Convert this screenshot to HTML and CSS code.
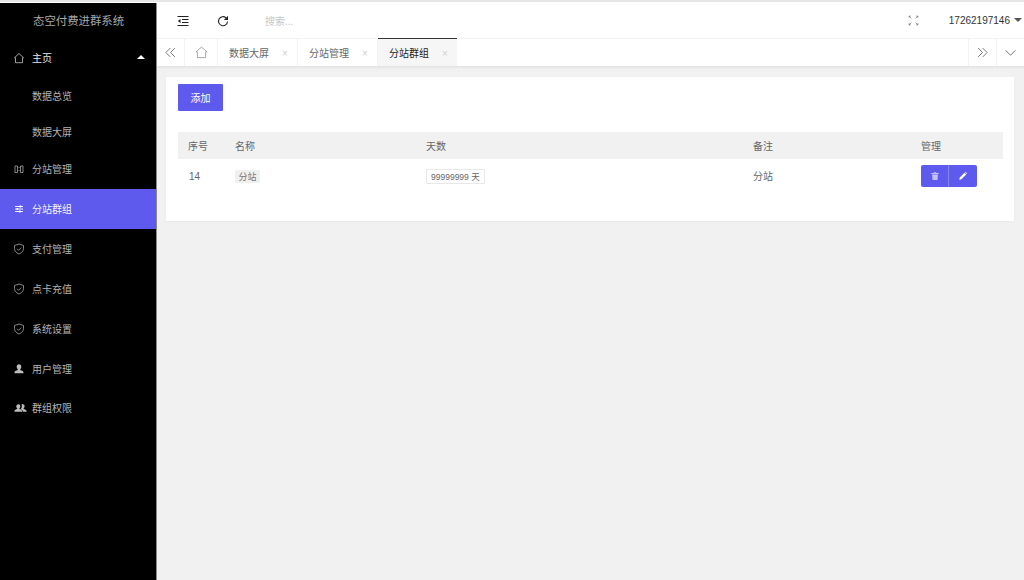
FILE: index.html
```html
<!DOCTYPE html>
<html lang="zh">
<head>
<meta charset="utf-8">
<title>态空付费进群系统</title>
<link rel="stylesheet" href="styles.css">
</head>
<body>
<div class="app">
  <aside class="sidebar">
    <div class="brand">态空付费进群系统</div>
    <nav class="menu">
      <a class="item parent"><svg class="ico" viewBox="0 0 12 12"><path d="M1.500 5.700 6 1.500l4.500 4.200h-1v5h-7v-5z"/></svg><span>主页</span><i class="caret"></i></a>
      <a class="sub sub-a">数据总览</a>
      <a class="sub sub-b">数据大屏</a>
      <a class="item"><svg class="ico" viewBox="0 0 12 12"><path d="M2 3h2.500v6.500H2zM7.500 3H10v6.500H7.500zM6 4v1M6 7v1"/></svg><span>分站管理</span></a>
      <a class="item active"><svg class="ico" viewBox="0 0 12 12"><path d="M2 3.500h8M2 6h8M2 8.500h8"/><path class="knob" d="M6.500 2.600h1.700v1.800H6.500zM3.500 5.100h1.700v1.800H3.500zM6 7.600h1.700v1.800H6z"/></svg><span>分站群组</span></a>
      <a class="item"><svg class="ico" viewBox="0 0 12 12"><path d="M6 1 10.500 2.500v3.200c0 2.500-2 4.200-4.500 5.300-2.500-1.100-4.500-2.800-4.500-5.300V2.500z"/><path d="m4 5.800 1.500 1.500L8.200 4.600"/></svg><span>支付管理</span></a>
      <a class="item"><svg class="ico" viewBox="0 0 12 12"><path d="M6 1 10.500 2.500v3.200c0 2.500-2 4.200-4.500 5.300-2.500-1.100-4.500-2.800-4.500-5.300V2.500z"/><path d="m4 5.800 1.500 1.500L8.200 4.600"/></svg><span>点卡充值</span></a>
      <a class="item"><svg class="ico" viewBox="0 0 12 12"><path d="M6 1 10.500 2.500v3.200c0 2.500-2 4.200-4.500 5.300-2.500-1.100-4.500-2.800-4.500-5.300V2.500z"/><path d="m4 5.800 1.500 1.500L8.200 4.600"/></svg><span>系统设置</span></a>
      <a class="item tight"><svg class="ico solid" viewBox="0 0 12 12"><path d="M6 1.200c1.500 0 2.300 1.100 2.300 2.500 0 1-.5 2-1.100 2.500v.9c1.300.5 3.300 1 3.300 2.400v.7h-9v-.7c0-1.400 2-1.900 3.300-2.400v-.9c-.6-.5-1.100-1.500-1.100-2.500C3.700 2.300 4.500 1.200 6 1.200z"/></svg><span>用户管理</span></a>
      <a class="item"><svg class="ico solid wide" viewBox="0 0 14 12"><path d="M4.800 2c1.300 0 2 1 2 2.200 0 .9-.4 1.700-1 2.200v.8c1.200.4 2.900.9 2.900 2.100v.7H.5v-.7c0-1.200 1.700-1.700 2.900-2.100v-.8c-.6-.5-1-1.300-1-2.200C2.800 3 3.500 2 4.800 2z"/><path d="M9.500 2c1.200 0 1.900 1 1.900 2.200 0 .9-.4 1.700-1 2.200v.8c1.100.4 3.100.9 3.100 2.100v.7h-4c0-1.300-.8-2-2-2.600v-.8c.7-.6 1-1.500 1-2.400 0-.7-.1-1.300-.4-1.700.2-.3.9-.9 1.400-.9z"/></svg><span>群组权限</span></a>
    </nav>
  </aside>
  <main class="main">
    <header class="topbar">
      <button class="tool"><svg viewBox="0 0 12 12"><path d="M.5 1.500h11M5 4.500h6.500M5 7.500h6.500M.5 10.500h11"/><path class="fill" d="M3.500 4v4L.8 6z"/></svg></button>
      <button class="tool"><svg viewBox="0 0 12 12"><path d="M10.500 6.500a4.500 4.500 0 1 1-1.500-3.700"/><path class="fill" d="M11 .8v4.200H6.800z"/></svg></button>
      <span class="search">搜索...</span>
      <svg class="full" viewBox="0 0 10 10"><path d="M1 1l2 2M9 1 7 3M1 9l2-2M9 9 7 7"/><path d="M1 2.500V1h1.500M7.500 1H9v1.500M1 7.500V9h1.500M9 7.500V9H7.500"/></svg>
      <span class="user">17262197146</span><i class="user-caret"></i>
    </header>
    <div class="tabs">
      <a class="tab-ctl"><svg viewBox="0 0 10 10"><path d="M4.800 1 .8 5l4 4M9 1 5 5l4 4"/></svg></a>
      <a class="tab-home"><svg viewBox="0 0 12 12"><path d="M.8 5.500 6 1l5.200 4.500H9.800v5.200H2.200V5.500z"/></svg></a>
      <a class="tab">数据大屏<em>×</em></a>
      <a class="tab">分站管理<em>×</em></a>
      <a class="tab current">分站群组<em>×</em></a>
      <span class="tabs-fill"></span>
      <a class="tab-ctl wide"><svg viewBox="0 0 10 10"><path d="m5.200 1 4 4-4 4M1 1l4 4-4 4"/></svg></a>
      <a class="tab-ctl wide"><svg viewBox="0 0 10 10"><path d="M.5 3 5 7.500 9.500 3"/></svg></a>
    </div>
    <section class="content">
      <div class="card">
        <button class="add">添加</button>
        <table class="grid">
          <thead>
            <tr><th class="c1">序号</th><th class="c2">名称</th><th class="c3">天数</th><th class="c4">备注</th><th>管理</th></tr>
          </thead>
          <tbody>
            <tr>
              <td class="num">14</td>
              <td><span class="tag">分站</span></td>
              <td><span class="tag plain">99999999 天</span></td>
              <td>分站</td>
              <td class="ops"><div class="btns">
                <button class="act dim"><svg viewBox="0 0 12 12"><path d="M1.500 2.500h9v1h-9zM4.500 1.200h3v1h-3zM2.500 4.200h7l-.5 6.600H3z"/></svg></button>
                <button class="act"><svg viewBox="0 0 12 12"><path d="m1.500 10.500.6-2.600 5.700-5.700 2 2-5.700 5.700zM8.400 1.600l.6-.6 2 2-.6.600z"/></svg></button>
              </div></td>
            </tr>
          </tbody>
        </table>
      </div>
    </section>
  </main>
</div>
</body>
</html>
```
FILE: styles.css
```css
* { box-sizing: border-box; }
html, body { margin: 0; height: 100%; }
body {
  background: #f1f1f1;
  color: #666;
  font: 10px/1.4 "Liberation Sans", "Noto Sans CJK SC", sans-serif;
  overflow: hidden;
}
a { text-decoration: none; color: inherit; display: block; }
button { font: inherit; border: 0; padding: 0; background: none; }
svg { display: block; }

.app { display: flex; height: 580px; padding-top: 1px; border-top: 2px solid #e6e6e6; background: #fff; }

.sidebar { width: 157px; flex: none; background: #000; border-right: 1px solid #8a8a8a; color: #bdbdbd; }
.brand { height: 35px; line-height: 36px; padding-left: 33px; font-size: 11.4px; color: #a8a8a8; white-space: nowrap; }
.item { display: flex; align-items: center; height: 40px; padding-left: 13px; color: #b4b4b4; }
.item.tight { height: 39px; }
.item span { margin-left: 7px; padding-top: 2px; }
.item.parent { color: #e6e6e6; position: relative; }
.sub { padding-left: 32px; color: #b4b4b4; height: 36px; line-height: 38px; }
.sub-b { height: 35px; line-height: 37px; }
.active { background: #5f5aee; color: #f4f4ff; }
.ico { width: 12px; height: 12px; flex: none; fill: none; stroke: #b0b0b0; stroke-width: .75; }
.parent .ico { stroke: #d0d0d0; }
.ico.solid { fill: #bcbcbc; stroke: none; }
.ico.wide { width: 13px; margin-left: 1px; margin-right: -2px; }
.active .ico { stroke: #fff; stroke-width: .9; }
.active .knob { fill: #fff; stroke: none; }
.caret { position: absolute; left: 137px; top: 17px; border: 4.500px solid transparent; border-top: 0; border-bottom: 4px solid #fff; }

.main { flex: 1; min-width: 0; display: flex; flex-direction: column; background: #f1f1f1; }
.topbar { height: 35px; flex: none; background: #fff; display: flex; align-items: center; padding-left: 20px; color: #333; }
.tool { width: 12px; height: 12px; margin-right: 28px; }
.tool svg { width: 12px; height: 12px; fill: none; stroke: #222; stroke-width: 1.100; }
.tool .fill { fill: #222; stroke: none; }
.search { margin-left: 8px; color: #c6c6c6; flex: 1; padding-top: 2px; }
.full { width: 11px; height: 11px; fill: none; stroke: #777; stroke-width: .7; margin-right: 30px; }
.user { color: #333; padding-top: 1px; }
.user-caret { margin: 0 2px 2px 4px; border: 4px solid transparent; border-bottom: 0; border-top: 4px solid #555; }

.tabs { height: 29px; flex: none; background: #fff; display: flex; border-bottom: 1px solid #e4e4e4; box-shadow: 0 1px 2px rgba(0,0,0,.05); border-top: 1px solid #f3f3f3; color: #666; }
.tabs svg { fill: none; stroke: #666; stroke-width: .8; }
.tab-ctl { width: 28px; display: flex; align-items: center; justify-content: center; border-right: 1px solid #f2f2f2; }
.tab-ctl svg { width: 11px; height: 11px; }
.tab-ctl.wide { border-right: 0; border-left: 1px solid #f2f2f2; }
.tab-home { width: 33px; display: flex; align-items: center; justify-content: center; border-right: 1px solid #f2f2f2; }
.tab-home svg { width: 13px; height: 13px; stroke: #999; }
.tab { width: 80px; padding-left: 11px; line-height: 29px; border-right: 1px solid #f2f2f2; white-space: nowrap; }
.tab em { margin-left: 13px; font-style: normal; color: #d0d0d0; font-size: 10px; }
.tab.current { width: 79px; background: #f6f6f6; color: #222; border-top: 1px solid #333; margin-top: -1px; line-height: 30px; border-right: 0; }
.tabs-fill { flex: 1; }

.content { padding: 10px 10px 10px 9px; flex: 1; }
.card { background: #fff; height: 144px; padding: 7px 11px 0 12px; box-shadow: 0 1px 2px rgba(0,0,0,.04); }
.add { display: block; width: 45px; height: 27px; padding-top: 2px; background: #5f5aee; color: #fff; border-radius: 1px; }
.grid { margin-top: 21px; width: 100%; border-collapse: collapse; table-layout: fixed; }
.grid th { height: 27px; background: #f1f1f1; font-weight: 400; text-align: left; padding: 2px 0 0 10px; color: #666; }
.grid td { height: 34px; padding: 2px 0 0 10px; color: #666; }
.grid .num { padding-left: 11px; }
.grid .ops { padding-top: 0; }
.c1 { width: 47px; }
.c2 { width: 191px; }
.c3 { width: 327px; }
.c4 { width: 168px; }
.tag { display: inline-block; height: 13px; line-height: 14px; padding: 0 3.500px; background: #f0f0f0; color: #777; font-size: 9px; border-radius: 1px; }
.plain { height: 15px; line-height: 14px; padding: 0 4px; background: #fff; border: 1px solid #e8e8e8; color: #666; font-size: 8.500px; vertical-align: 1px; }
.btns { display: flex; width: 56px; }
.act { width: 28px; height: 22px; background: #5f5aee; display: flex; align-items: center; justify-content: center; border-radius: 0 2px 2px 0; }
.act svg { width: 10px; height: 10px; fill: #fff; }
.act.dim { border-right: 1px solid #8a86f3; border-radius: 2px 0 0 2px; }
.act.dim svg { fill: #c3c1f8; }
```
